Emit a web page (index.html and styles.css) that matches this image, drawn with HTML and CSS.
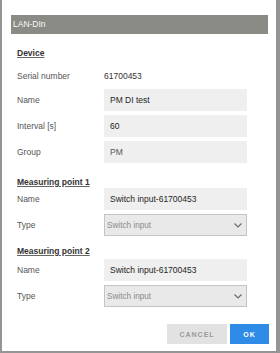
FILE: index.html
```html
<!DOCTYPE html>
<html lang="en">

<head>
    <meta charset="UTF-8">
    <meta name="viewport" content="width=device-width, initial-scale=1.0">
    <title>LAN-DIn</title>

    <link rel="stylesheet" href="styles.css">

</head>

<body>

    <div class="dialog">
        <div class="titleBar">LAN-DIn</div>

        <div class="content">
            <div class="grupo">
                <h2 class="grupoTitulo">Device</h2>
                <div class="linha linhaSerial">
                    <span class="rotulo">Serial number</span>
                    <span class="valor">61700453</span>
                </div>
                <div class="linha linhaPrimeira">
                    <span class="rotulo">Name</span>
                    <div class="campo">PM DI test</div>
                </div>
                <div class="linha">
                    <span class="rotulo">Interval [s]</span>
                    <div class="campo">60</div>
                </div>
                <div class="linha">
                    <span class="rotulo">Group</span>
                    <div class="campo campoMudo">PM</div>
                </div>
            </div>

            <div class="grupo grupo2">
                <h2 class="grupoTitulo">Measuring point 1</h2>
                <div class="linha linhaColada">
                    <span class="rotulo">Name</span>
                    <div class="campo">Switch input-61700453</div>
                </div>
                <div class="linha">
                    <span class="rotulo">Type</span>
                    <div class="selecao">
                        <span>Switch input</span>
                        <svg class="seta" width="8" height="5" viewBox="0 0 8 5">
                            <polyline points="0.5,0.5 4,4 7.5,0.5" fill="none" stroke="#6b6b6b" stroke-width="1.2"/>
                        </svg>
                    </div>
                </div>
            </div>

            <div class="grupo grupo3">
                <h2 class="grupoTitulo">Measuring point 2</h2>
                <div class="linha linhaPrimeira">
                    <span class="rotulo">Name</span>
                    <div class="campo">Switch input-61700453</div>
                </div>
                <div class="linha">
                    <span class="rotulo">Type</span>
                    <div class="selecao">
                        <span>Switch input</span>
                        <svg class="seta" width="8" height="5" viewBox="0 0 8 5">
                            <polyline points="0.5,0.5 4,4 7.5,0.5" fill="none" stroke="#6b6b6b" stroke-width="1.2"/>
                        </svg>
                    </div>
                </div>
            </div>
        </div>

        <div class="acoes">
            <button class="btn btnCancel">CANCEL</button>
            <button class="btn btnOk">OK</button>
        </div>
    </div>

</body>

</html>
```

FILE: styles.css
```css
body {
    margin: 0;
    background-color: #959595;
    font-family: "Liberation Sans", Arial, sans-serif;
    font-size: 8.5px;
}

.dialog {
    margin: 0 4px 0 2px;
    height: 351px;
    background-color: #ffffff;
    display: flex;
    flex-direction: column;
}

.titleBar {
    margin: 15px 8px 0 9px;
    height: 19px;
    line-height: 19px;
    padding-left: 2px;
    background-color: #8b8b85;
    color: #f7f7f7;
}

.content {
    padding-left: 15px;
}

.grupo2 {
    margin-top: 0;
}

.grupoTitulo {
    margin: 13px 0 0 0;
    height: 12px;
    line-height: 12px;
    font-size: 8.5px;
    font-weight: bold;
    color: #333333;
    text-decoration: underline;
    text-decoration-color: #666666;
}

.grupo3 .grupoTitulo {
    margin-top: 9px;
}

.linha {
    display: flex;
    align-items: center;
    height: 22px;
    margin-top: 4px;
}

.linhaSerial {
    margin-top: 6px;
}

.linhaPrimeira {
    margin-top: 2px;
}

.linhaColada {
    margin-top: 0;
}

.rotulo {
    width: 87px;
    color: #555555;
}

.valor {
    color: #333333;
}

.campo {
    box-sizing: border-box;
    width: 143px;
    height: 22px;
    line-height: 22px;
    padding-left: 6px;
    background-color: #efefef;
    color: #1e1e1e;
}

.campoMudo {
    color: #555555;
}

.selecao {
    box-sizing: border-box;
    width: 143px;
    height: 22px;
    padding: 0 4px 0 2px;
    display: flex;
    align-items: center;
    justify-content: space-between;
    border: 1px solid #c4c4c4;
    background-color: #e9e9e9;
    color: #8a8a8a;
    font-size: 8.2px;
}

.acoes {
    display: flex;
    justify-content: flex-end;
    gap: 3px;
    margin-top: 17px;
    padding-right: 7px;
}

.btn {
    height: 20px;
    border: none;
    padding: 0;
    font-family: "Liberation Sans", Arial, sans-serif;
    font-size: 7px;
    font-weight: bold;
    letter-spacing: 1px;
}

.btnCancel {
    width: 60px;
    background-color: #e2e2e2;
    color: #9a9a9a;
}

.btnOk {
    width: 39px;
    background-color: #2e8be6;
    color: #ffffff;
}
```
